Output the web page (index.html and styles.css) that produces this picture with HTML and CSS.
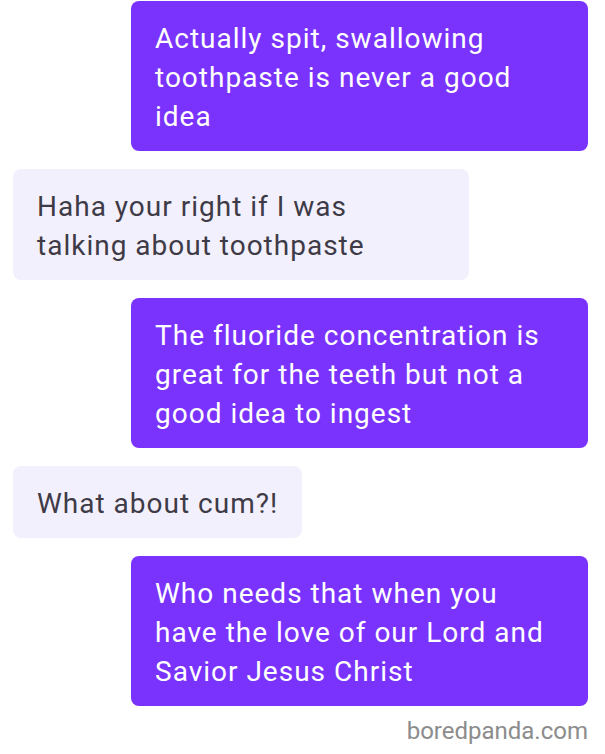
FILE: index.html
```html
<!DOCTYPE html>
<html lang="en">
<head>
    <meta charset="UTF-8">
    <title>Chat</title>
    <link rel="stylesheet" href="styles.css">
</head>
<body>
    <div id="chat">
        <div class="msg out">Actually spit, swallowing<br>toothpaste is never a good<br>idea</div>
        <div class="msg in wide">Haha your right if I was<br>talking about toothpaste</div>
        <div class="msg out">The fluoride concentration is<br>great for the teeth but not a<br>good idea to ingest</div>
        <div class="msg in">What about cum?!</div>
        <div class="msg out">Who needs that when you<br>have the love of our Lord and<br>Savior Jesus Christ</div>
        <div id="mark">boredpanda.com</div>
    </div>
</body>
</html>
```

FILE: styles.css
```css
*{
    margin: 0;
    padding: 0;
    box-sizing: border-box;
}
body{
    background: #ffffff;
    font-family: Roboto, "Liberation Sans", sans-serif;
}
#chat{
    width: 605px;
    height: 754px;
    padding: 1px 17px 0 13px;
    display: flex;
    flex-direction: column;
    gap: 18px;
}
.msg{
    padding: 18px 24px 15px;
    font-size: 28px;
    line-height: 39px;
    letter-spacing: 1px;
    border-radius: 8px;
    white-space: nowrap;
}
.out{
    align-self: flex-end;
    width: 457px;
    background: #7a33fd;
    color: #ffffff;
}
.in{
    align-self: flex-start;
    background: #f3f0fd;
    color: #3e3b47;
}
.in.wide{
    width: 456px;
}
#mark{
    align-self: flex-end;
    margin-top: -7px;
    font-size: 24px;
    color: #8c8c8c;
}
```
